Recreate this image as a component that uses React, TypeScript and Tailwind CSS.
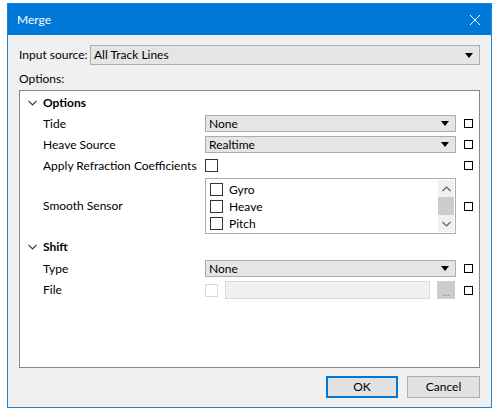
import React from 'react';

const font = { fontFamily: 'Lato, "Noto Sans", "Liberation Sans", sans-serif' };

const Arrow = () => (
  <svg width="8" height="5" viewBox="0 0 8 5" className="shrink-0">
    <path d="M0 0 H8 L4 5 Z" fill="#000" />
  </svg>
);

const Combo = ({ value, className }: { value: string; className?: string }) => (
  <div
    className={`flex h-[17px] items-center justify-between border border-[#acacac] bg-[#e5e5e5] pl-[3px] pr-[6px] ${className ?? ''}`}
  >
    <span className="leading-none">{value}</span>
    <Arrow />
  </div>
);

const TinyBox = () => <div className="h-[9px] w-[9px] border border-black bg-white" />;

const Chevron = () => (
  <svg width="9" height="6" viewBox="0 0 9 6" className="shrink-0">
    <path d="M0.5 0.8 L4.5 4.8 L8.5 0.8" fill="none" stroke="#333" strokeWidth="1.2" />
  </svg>
);

const Row = ({
  label,
  h = 'h-[21px]',
  children,
}: {
  label: string;
  h?: string;
  children?: React.ReactNode;
}) => (
  <div className={`flex items-center ${h}`}>
    <div className="w-[185px] pl-[23px] whitespace-nowrap">{label}</div>
    <div className="flex w-[251px] items-center">{children}</div>
    <div className="flex w-[23px] justify-center pl-[2px]">
      <TinyBox />
    </div>
  </div>
);

const Header = ({ label, h = 'h-[21px]' }: { label: string; h?: string }) => (
  <div className={`flex items-center ${h}`}>
    <div className="flex w-[23px] justify-center pl-[2px]">
      <Chevron />
    </div>
    <span className="font-bold">{label}</span>
  </div>
);

const ListItem = ({ label }: { label: string }) => (
  <div className="flex h-[17px] items-center gap-[6px] pl-[4px]">
    <div className="h-[13px] w-[13px] border border-[#333] bg-white" />
    <span>{label}</span>
  </div>
);

export default function App() {
  return (
    <div className="h-[413px] w-[496px] bg-white pl-[7px] pt-[3px] text-[12px] text-black" style={font}>
      <div className="flex h-[405px] w-[485px] flex-col border border-[#1883d7] bg-[#f0f0f0]">
        <div className="flex h-[31px] items-center justify-between bg-[#0078d7] pl-[9px] pr-[10px] text-white">
          <span className="text-[12px]">Merge</span>
          <svg width="12" height="12" viewBox="0 0 12 12">
            <path d="M1 1 L11 11 M11 1 L1 11" stroke="#fff" strokeWidth="1" />
          </svg>
        </div>

        <div className="flex flex-1 flex-col px-[11px] pt-[10px]">
          <div className="flex h-[20px] items-center">
            <span className="w-[71px] whitespace-nowrap">Input source:</span>
            <Combo value="All Track Lines" className="h-[20px] flex-1" />
          </div>
          <div className="mt-[6px] h-[19px] leading-[16px]">Options:</div>

          <div className="h-[278px] border border-[#828790] bg-white pt-px">
            <Header label="Options" />
            <Row label="Tide">
              <Combo value="None" className="w-full" />
            </Row>
            <Row label="Heave Source">
              <Combo value="Realtime" className="w-full" />
            </Row>
            <Row label="Apply Refraction Coefficients">
              <div className="h-[13px] w-[13px] border border-[#333] bg-white" />
            </Row>
            <Row label="Smooth Sensor" h="h-[60px]">
              <div className="flex h-[56px] w-full border border-[#abadb3] bg-white">
                <div className="flex flex-1 flex-col pt-[2px]">
                  <ListItem label="Gyro" />
                  <ListItem label="Heave" />
                  <ListItem label="Pitch" />
                </div>
                <div className="my-px mr-px flex w-[16px] flex-col items-center bg-[#f0f0f0]">
                  <div className="flex h-[17px] items-center justify-center">
                    <svg width="9" height="6" viewBox="0 0 9 6">
                      <path d="M0.5 5 L4.5 1 L8.5 5" fill="none" stroke="#606060" strokeWidth="1.2" />
                    </svg>
                  </div>
                  <div className="h-[18px] w-full bg-[#cdcdcd]" />
                  <div className="flex flex-1 items-center justify-center">
                    <svg width="9" height="6" viewBox="0 0 9 6">
                      <path d="M0.5 1 L4.5 5 L8.5 1" fill="none" stroke="#606060" strokeWidth="1.2" />
                    </svg>
                  </div>
                </div>
              </div>
            </Row>
            <Header label="Shift" h="h-[22px]" />
            <Row label="Type">
              <Combo value="None" className="w-full" />
            </Row>
            <Row label="File" h="h-[22px]">
              <div className="h-[13px] w-[13px] border border-[#d9d9d9] bg-white" />
              <div className="ml-[7px] h-[18px] w-[205px] border border-[#d9d9d9] bg-[#f0f0f0]" />
              <div className="ml-[7px] flex h-[18px] w-[18px] items-end justify-center bg-[#cccccc] pb-[2px] text-[10px] leading-none text-[#888]">
                ...
              </div>
            </Row>
          </div>

          <div className="mt-[8px] flex justify-end gap-[9px]">
            <button className="h-[22px] w-[72px] border-2 border-[#0078d7] bg-[#e1e1e1]">OK</button>
            <button className="h-[22px] w-[73px] border border-[#adadad] bg-[#e1e1e1]">Cancel</button>
          </div>
        </div>
      </div>
    </div>
  );
}
